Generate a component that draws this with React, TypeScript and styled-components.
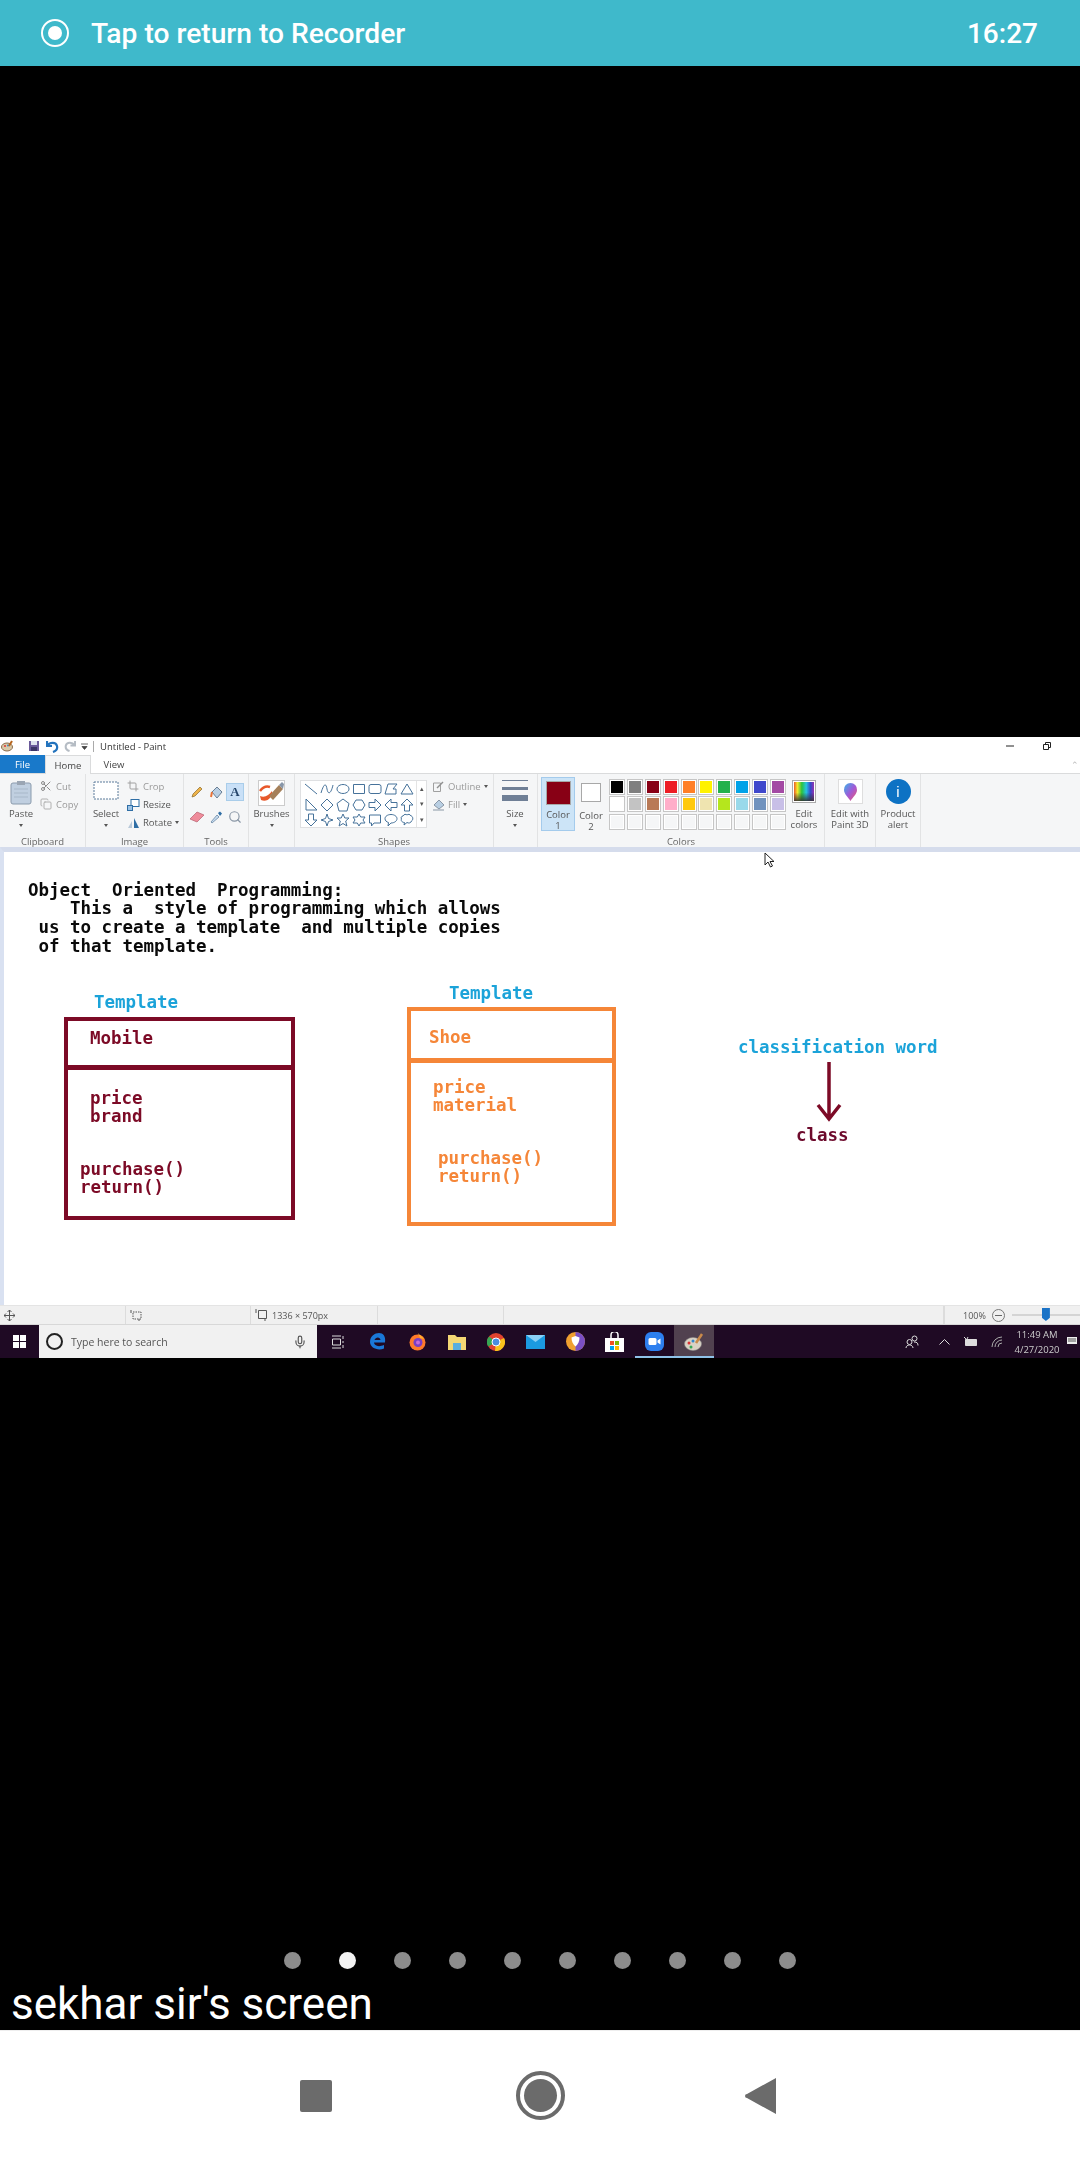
import React from "react";
import styled, { createGlobalStyle } from "styled-components";
import { Scissors, Copy, Crop, Search, Mic } from "lucide-react";

const Global = createGlobalStyle`
  html, body { margin: 0; padding: 0; background: #000; }
  #root { width: 1080px; height: 2160px; }
  * { box-sizing: border-box; }
`;

const Screen = styled.div`
  width: 1080px; height: 2160px; display: flex; flex-direction: column; background: #000; overflow: hidden;
  font-family: Roboto, sans-serif;
`;
const TopBar = styled.div`
  height: 66px; background: #3fb9cb; color: #fff; display: flex; align-items: center; padding: 0 42px 0 41px; flex: none;
`;
const RecDot = styled.div`
  width: 28px; height: 28px; border-radius: 50%; border: 2px solid #fff; display: flex; align-items: center; justify-content: center; margin-right: 22px;
  &::after { content: ""; width: 14px; height: 14px; border-radius: 50%; background: #fff; }
`;
const TopText = styled.div`
  font: 500 28.2px/69px Roboto, sans-serif; flex: 1;
`;
const TopTime = styled.div`
  font: 500 28px/69px Roboto, sans-serif;
`;
const BlackGap = styled.div`
  height: 671px; flex: none; background: #000;
`;
const Paint = styled.div`
  height: 621px; flex: none; display: flex; flex-direction: column; background: #fff; filter: blur(0.35px);
  font-family: "Open Sans", "Noto Sans", sans-serif; color: #555; font-size: 9.5px; position: relative;
`;
const TitleRow = styled.div`
  height: 18px; display: flex; align-items: center; background: #fff; padding-right: 29px;
`;
const TitleText = styled.span`
  font-size: 9.5px; color: #333; margin-left: 1px; padding-left: 6px; border-left: 1px solid #aaa; line-height: 11px;
`;
const QuickIcon = styled.span<{ $w: number }>`
  width: ${p => p.$w}px; height: 18px; display: flex; align-items: center; justify-content: center; flex: none;
`;
const WinControls = styled.div`
  margin-left: auto; display: flex; align-items: center; gap: 29px;
`;
const TabsRow = styled.div`
  height: 19px; display: flex; align-items: stretch; background: #fff; border-bottom: 1px solid #dadbdc; position: relative;
`;
const Tab = styled.div<{ $kind?: "file" | "active" }>`
  width: ${p => (p.$kind ? (p.$kind === "file" ? 45 : 46) : 34)}px;
  margin-left: ${p => (p.$kind ? 0 : 6)}px;
  height: ${p => (p.$kind === "active" ? 19 : 18)}px;
  display: flex; align-items: center; justify-content: center; font-size: 9.5px;
  background: ${p => (p.$kind === "file" ? "#1979ca" : p.$kind === "active" ? "#f5f6f7" : "#fff")};
  color: ${p => (p.$kind === "file" ? "#fff" : "#444")};
  ${p => p.$kind === "active" && "border: 1px solid #dadbdc; border-bottom: none;"}
`;
const Collapse = styled.div`
  position: absolute; right: 1px; top: 5px; color: #bbb; font-size: 9px; line-height: 9px;
`;
const Ribbon = styled.div`
  height: 73px; display: flex; background: #f5f6f7; flex: none;
`;
const Group = styled.div<{ $w: number }>`
  width: ${p => p.$w}px; flex: none; height: 100%; display: flex; flex-direction: column; position: relative;
  border-right: 1px solid #e2e3e4; 
`;
const GroupBody = styled.div`
  flex: 1; display: flex; min-height: 0;
`;
const GroupLabel = styled.div`
  height: 11px; line-height: 11px; text-align: center; font-size: 9.5px; color: #666; flex: none;
`;
const LargeButton = styled.div<{ $w: number; $ml?: number }>`
  width: ${p => p.$w}px; margin-left: ${p => p.$ml ?? 0}px; flex: none; display: flex; flex-direction: column; align-items: center; padding-top: 6px;
`;
const LargeIcon = styled.div`
  height: 29px; display: flex; align-items: flex-start; justify-content: center; flex: none;
`;
const LargeText = styled.div`
  font-size: 9.5px; line-height: 10.5px; color: #555; text-align: center; white-space: pre-line;
`;
const Caret = styled.div`
  width: 0; height: 0; border: 2px solid transparent; border-top: 3px solid #555; margin-top: 4px;
`;
const SmallStack = styled.div<{ $ml?: number }>`
  display: flex; flex-direction: column; padding-top: 3px; margin-left: ${p => p.$ml ?? 0}px;
`;
const SmallRow = styled.div<{ $dim?: boolean }>`
  height: 18px; display: flex; align-items: center; gap: 3px; font-size: 9.5px; white-space: nowrap;
  color: ${p => (p.$dim ? "#9a9a9a" : "#555")};
`;
const SmallIcon = styled.span`
  width: 14px; height: 14px; display: flex; align-items: center; justify-content: center; flex: none;
`;
const InlineCaret = styled.span`
  width: 0; height: 0; border: 2px solid transparent; border-top: 3px solid #555; margin-top: 3px;
`;
const ToolGrid = styled.div`
  display: grid; grid-template-columns: repeat(3, 18px); grid-auto-rows: 18px; row-gap: 7px; padding: 9px 0 0 4px; column-gap: 1px;
`;
const ToolCell = styled.div<{ $on?: boolean }>`
  display: flex; align-items: center; justify-content: center;
  ${p => p.$on && "background:#c9e0f7;border:1px solid #a9cdea;"}
  font: bold 13px "Liberation Serif", serif; color: #26456b;
`;
const Gallery = styled.div`
  margin: 6px 0 0 5px; width: 127px; height: 48px; background: #fff; border: 1px solid #dfe0e2; display: flex; flex: none;
`;
const ShapeGrid = styled.div`
  display: grid; grid-template-columns: repeat(7, 16px); grid-auto-rows: 15.5px; width: 115px; padding: 0 0 0 2px;
`;
const ShapeCell = styled.svg`
  width: 14px; height: 14px; fill: none; stroke: #46729a; stroke-width: 1; margin: 1px;
`;
const GalleryScroll = styled.div`
  flex: 1; border-left: 1px solid #e4e4e4; display: flex; flex-direction: column; align-items: center; justify-content: space-around; color: #555; font-size: 7px; line-height: 7px;
`;
const SizeLines = styled.div`
  width: 26px; height: 21px; display: flex; flex-direction: column; justify-content: space-between;
`;
const SizeLine = styled.div<{ $h: number }>`
  height: ${p => p.$h}px; background: #6f7f96;
`;
const ColorButton = styled.div<{ $on?: boolean; $w: number; $ml: number }>`
  width: ${p => p.$w}px; margin: 3px 0 0 ${p => p.$ml}px; height: 54px; flex: none; display: flex; flex-direction: column; align-items: center; text-align: center;
  ${p => (p.$on ? "background:#cce4f7;border:1px solid #a4cbec;padding-top:3px;" : "padding-top:6px;")}
`;
const BigSwatch = styled.div<{ $c: string; $s: number }>`
  width: ${p => p.$s + 1}px; height: ${p => p.$s}px; background: ${p => p.$c}; border: 1px solid #a8a8a8; margin-bottom: ${p => (p.$s > 22 ? 5 : 9)}px; flex: none;
`;
const Palette = styled.div`
  display: grid; grid-template-columns: repeat(10, 16px); grid-auto-rows: 16px; gap: 1.4px 1.9px; margin: 5px 0 0 2px; flex: none;
`;
const PalCell = styled.div<{ $c?: string }>`
  background: ${p => p.$c ?? "#f5f6f7"}; border: 1px solid #c6c6c6; box-shadow: inset 0 0 0 1px #fff;
`;
const EditGrad = styled.div`
  width: 24px; height: 23px; border: 1px solid #aaa; box-shadow: inset 0 0 0 1px #fff;
  background: linear-gradient(#0000 55%, #333), linear-gradient(90deg, #e6312a, #f5e82a, #2ac23f, #25c4e0, #3647c9, #b02ca8);
`;
const Tile = styled.div`
  width: 25px; height: 25px; background: #fff; border: 1px solid #dedede; display: flex; align-items: center; justify-content: center; margin-top: -1px;
`;
const InfoDot = styled.div`
  width: 25px; height: 25px; margin-top: -1px; border-radius: 50%; background: #0d72c4; color: #fff; display: flex; align-items: center; justify-content: center;
  font: 15px "Liberation Sans", sans-serif;
`;
const Canvas = styled.div`
  height: 458px; flex: none; background: #fff; border-top: 5px solid #d5dcec; border-left: 4px solid #d9e1f1; position: relative; overflow: hidden;
`;
const Drawn = styled.div<{ $x: number; $y: number; $c: string }>`
  position: absolute; left: ${p => p.$x - 4}px; top: ${p => p.$y - 852 - 9.5}px; color: ${p => p.$c};
  font: bold 17.5px/18.8px "DejaVu Sans Mono", monospace; white-space: pre; letter-spacing: -0.03px;
`;
const ClassBox = styled.div<{ $x: number; $y: number; $w: number; $h: number; $c: string; $d: number }>`
  position: absolute; left: ${p => p.$x - 4}px; top: ${p => p.$y - 852}px; width: ${p => p.$w}px; height: ${p => p.$h}px;
  border: 4px solid ${p => p.$c};
  &::after { content: ""; position: absolute; left: -4px; right: -4px; top: ${p => p.$d}px; height: 5px; background: ${p => p.$c}; }
`;
const FloatingSvg = styled.svg<{ $x: number; $y: number }>`
  position: absolute; left: ${p => p.$x}px; top: ${p => p.$y}px;
`;
const StatusBar = styled.div`
  height: 20px; flex: none; background: #f0f0f0; border-top: 1px solid #e4e4e4; border-bottom: 1px solid #d8d8d8; display: flex; font-size: 9px; color: #555;
`;
const StatusCell = styled.div<{ $w: number }>`
  width: ${p => p.$w}px; flex: none; display: flex; align-items: center; gap: 4px; padding-left: 4px; border-right: 1px solid #dcdcdc; white-space: nowrap;
`;
const ZoomCell = styled.div`
  flex: 1; display: flex; align-items: center; padding-left: 18px; white-space: nowrap; border-left: 1px solid #dcdcdc;
`;
const ZoomMinus = styled.div`
  width: 13px; height: 13px; border-radius: 50%; border: 1px solid #777; margin-left: 6px; display: flex; align-items: center; justify-content: center;
  &::after { content: ""; width: 7px; height: 1px; background: #666; }
`;
const ZoomTrack = styled.div`
  flex: 1; height: 2px; background: #d4d4d4; margin-left: 7px; position: relative;
`;
const ZoomThumb = styled.div`
  position: absolute; left: 30px; top: -6px; width: 8px; height: 13px; background: #1a73c7; clip-path: polygon(0 0, 100% 0, 100% 75%, 50% 100%, 0 75%);
`;
const Taskbar = styled.div`
  height: 33px; flex: none; background: #1f0a24; display: flex; align-items: stretch; color: #ddd;
`;
const StartBtn = styled.div`
  width: 39px; flex: none; display: flex; align-items: center; justify-content: center;
`;
const SearchBox = styled.div`
  width: 278px; flex: none; background: #f1f1f1; display: flex; align-items: center; padding-left: 7px; color: #555; font-size: 10.5px;
`;
const Cortana = styled.div`
  width: 17px; height: 17px; border-radius: 50%; border: 2.5px solid #222; margin-right: 8px;
`;
const SearchMic = styled.span`
  margin-left: auto; margin-right: 10px; display: flex; color: #555;
`;
const TaskView = styled.div`
  width: 41px; flex: none; display: flex; align-items: center; justify-content: center;
`;
const TaskBtn = styled.div<{ $open?: boolean; $active?: boolean }>`
  width: 39.5px; flex: none; display: flex; align-items: center; justify-content: center;
  ${p => p.$active && "background:#51414f;"}
  ${p => p.$open && "box-shadow: inset 0 -2px 0 #8fc2e8;"}
`;
const Tray = styled.div<{ $w: number }>`
  width: ${p => p.$w}px; flex: none; display: flex; align-items: center; justify-content: center;
`;
const TraySpacer = styled.div`
  flex: 1;
`;
const Clock = styled.div`
  width: 54px; flex: none; display: flex; flex-direction: column; align-items: center; justify-content: center; font-size: 9.5px; line-height: 15px; color: #ccc; white-space: nowrap;
`;
const Footer = styled.div`
  flex: 1; background: #000; display: flex; flex-direction: column; justify-content: flex-end;
`;
const Dots = styled.div`
  display: flex; justify-content: center; gap: 38px; margin-bottom: 11px;
`;
const Dot = styled.div<{ $on?: boolean }>`
  width: 17px; height: 17px; border-radius: 50%; background: ${p => (p.$on ? "#f2f2f2" : "#8c8c8c")};
`;
const Caption = styled.div`
  height: 50px; color: #fff; font: 400 44px/48px Roboto, sans-serif; padding-left: 11px; white-space: nowrap;
`;
const NavBar = styled.div`
  height: 130px; flex: none; background: #fff; display: flex; align-items: center; padding-left: 300px; border-top: 1px solid #eee;
`;
const NavSquare = styled.div`
  width: 32px; height: 32px; border-radius: 2px; background: #6b6b6b;
`;
const NavHome = styled.div`
  width: 49px; height: 49px; border-radius: 50%; border: 4px solid #6b6b6b; margin: 0 180px 0 184px; display: flex; align-items: center; justify-content: center;
  &::after { content: ""; width: 33px; height: 33px; border-radius: 50%; background: #6b6b6b; }
`;
const NavBack = styled.svg`
  width: 32px; height: 38px; fill: #6b6b6b;
`;

const shapes = [
  "M1 2 L13 12", "M1 11 C4 1 6 1 7 7 S11 12 13 3", "M7 2.5a6 4.5 0 1 0 .01 0Z", "M1.5 2.5h11v9h-11Z",
  "M3 2.5h8a2 2 0 0 1 2 2v5a2 2 0 0 1-2 2H3a2 2 0 0 1-2-2v-5a2 2 0 0 1 2-2Z", "M1 12 L4 2h9L9 7h3v5Z", "M7 2 L13 12H1Z",
  "M2 1v11h11Z", "M7 1l6 6-6 6-6-6Z", "M7 1l6 4.5-2 7.5H3L1 5.5Z", "M4 2h6l3 5-3 5H4L1 7Z", "M1 4.5h6V1l6 6-6 6V9.5H1Z", "M13 4.5H7V1L1 7l6 6V9.5h6Z", "M4.5 13V7H1l6-6 6 6H9.500V13Z",
  "M4.5 1v6H1l6 6 6-6H9.500V1Z", "M7 1l1.5 4.500L13 7l-4.500 1.500L7 13l-1.500-4.500L1 7l4.500-1.500Z", "M7 1l1.800 4H13l-3.300 3 1.200 5L7 10.500 3.100 13l1.200-5L1 5h4.200Z",
  "M7 1l1.700 3H13l-2 3 2 3H8.700L7 13l-1.700-3H1l2-3-2-3h4.300Z", "M1.500 2h11v8H6l-2.500 3v-3h-2Z", "M7 1.500c3.300 0 6 1.800 6 4.200S10.300 10 7 10l-3 3 .5-3.500C2.500 9 1 7.500 1 5.700 1 3.300 3.700 1.500 7 1.500Z",
  "M3 3c1-2 3-2 4-1 1-1 3-1 4 1 2 0 2.500 4 .5 5-.5 2-3 2.500-4.500 1.500L4 12l.5-2.500C2.500 9.500 .5 8 1.500 6 .5 4.500 1.500 3 3 3Z",
];
const row1 = ["#000000", "#7f7f7f", "#880015", "#ed1c24", "#ff7f27", "#fff200", "#22b14c", "#00a2e8", "#3f48cc", "#a349a4"];
const row2 = ["#ffffff", "#c3c3c3", "#b97a57", "#ffaec9", "#ffc90e", "#efe4b0", "#b5e61d", "#99d9ea", "#7092be", "#c8bfe7"];
const maroon = "#7c0a26", orange = "#f58638", blue = "#1ba3d9";

export default function App() {
  return (
    <Screen>
      <Global />
      <TopBar>
        <RecDot />
        <TopText>Tap to return to Recorder</TopText>
        <TopTime>16:27</TopTime>
      </TopBar>
      <BlackGap />
      <Paint>
        <TitleRow>
          <QuickIcon $w={14}>
            <svg width="12" height="12" viewBox="0 0 12 12"><ellipse cx="6" cy="7" rx="5.500" ry="4" fill="#d9c9a8" stroke="#8a6a4a" /><circle cx="4" cy="6" r="1" fill="#d33" /><circle cx="7" cy="5.500" r="1" fill="#38c" /><path d="M8 6 L11 1" stroke="#b5651d" strokeWidth="2" /></svg>
          </QuickIcon>
          <QuickIcon $w={14} />
          <QuickIcon $w={12}>
            <svg width="12" height="12" viewBox="0 0 12 12"><path d="M1 1h10v10H1Z" fill="#6a5a9a" /><path d="M3 1h6v4H3Z" fill="#dfe3ee" /><path d="M3 7h6v4H3Z" fill="#3b3566" /></svg>
          </QuickIcon>
          <QuickIcon $w={24}>
            <svg width="13" height="13" viewBox="0 0 13 13"><path d="M1 1v5h5M1.500 5.500C4 2 10 2 11 6c.7 3-1 5-4 6" fill="none" stroke="#2373bd" strokeWidth="2.200" /></svg>
          </QuickIcon>
          <QuickIcon $w={12}>
            <svg width="12" height="12" viewBox="0 0 13 13"><path d="M12 1v5H7M11.500 5.500C9 2 3 2 2 6c-.7 3 1 5 4 6" fill="none" stroke="#b5bcc4" strokeWidth="2.200" /></svg>
          </QuickIcon>
          <QuickIcon $w={16}>
            <svg width="7" height="7" viewBox="0 0 7 7"><path d="M0 1h7M1 3.500h5L3.500 6.500Z" fill="#444" stroke="#444" strokeWidth=".8" /></svg>
          </QuickIcon>
          <TitleText>Untitled - Paint</TitleText>
          <WinControls>
            <svg width="8" height="8" viewBox="0 0 8 8"><path d="M0 4h8" stroke="#222" /></svg>
            <svg width="8" height="8" viewBox="0 0 8 8"><path d="M.5 2.500h5v5h-5ZM2.500 2.500V.5h5v5h-2" fill="none" stroke="#222" /></svg>
          </WinControls>
        </TitleRow>
        <TabsRow>
          <Tab $kind="file">File</Tab>
          <Tab $kind="active">Home</Tab>
          <Tab>View</Tab>
          <Collapse>⌃</Collapse>
        </TabsRow>
        <Ribbon>
          <Group $w={86}>
            <GroupBody>
              <LargeButton $w={42}>
                <LargeIcon>
                  <svg width="22" height="25" viewBox="0 0 22 25"><rect x="1" y="3" width="20" height="21" rx="2" fill="#c0cfe0" stroke="#8b9bad" /><rect x="7" y="1" width="8" height="4" fill="#9aa5b3" /><path d="M4 9h14M4 13h14M4 17h14" stroke="#a8b8c9" /></svg>
                </LargeIcon>
                <LargeText>Paste</LargeText>
                <Caret />
              </LargeButton>
              <SmallStack $ml={-3}>
                <SmallRow $dim><SmallIcon><Scissors size={12} color="#8a8a8a" /></SmallIcon>Cut</SmallRow>
                <SmallRow $dim><SmallIcon><Copy size={12} color="#b0b0b0" /></SmallIcon>Copy</SmallRow>
              </SmallStack>
            </GroupBody>
            <GroupLabel>Clipboard</GroupLabel>
          </Group>
          <Group $w={98}>
            <GroupBody>
              <LargeButton $w={40}>
                <LargeIcon>
                  <svg width="26" height="20" viewBox="0 0 26 20"><rect x="1" y="2" width="24" height="17" fill="#fff" stroke="#5a7a9a" strokeDasharray="2 1" /></svg>
                </LargeIcon>
                <LargeText>Select</LargeText>
                <Caret />
              </LargeButton>
              <SmallStack>
                <SmallRow $dim><SmallIcon><Crop size={12} color="#a0a0a0" /></SmallIcon>Crop</SmallRow>
                <SmallRow><SmallIcon><svg width="13" height="13" viewBox="0 0 13 13"><rect x="4" y="1.500" width="8" height="7" fill="#fff" stroke="#2f6ea5" /><rect x=".5" y="7.500" width="5" height="5" fill="#9cc3e6" stroke="#2f6ea5" /></svg></SmallIcon>Resize</SmallRow>
                <SmallRow><SmallIcon><svg width="13" height="13" viewBox="0 0 13 13"><path d="M7 2 L12 12H7Z" fill="#2f6ea5" /><path d="M5 5 L1 12h4Z" fill="#b9c9d9" /></svg></SmallIcon>Rotate<InlineCaret /></SmallRow>
              </SmallStack>
            </GroupBody>
            <GroupLabel>Image</GroupLabel>
          </Group>
          <Group $w={65}>
            <GroupBody>
              <ToolGrid>
                <ToolCell><svg width="14" height="14" viewBox="0 0 14 14"><path d="M2 12 L3 9 L10 2 L12 4 L5 11Z" fill="#eeb34a" stroke="#8a6a2a" strokeWidth=".7" /></svg></ToolCell>
                <ToolCell><svg width="15" height="15" viewBox="0 0 15 15"><path d="M3 7 L8 2 L13 7 L8 13Z" fill="#b9cfe3" stroke="#6a7f95" /><path d="M3 7 L2 12" stroke="#e8743a" strokeWidth="2" /></svg></ToolCell>
                <ToolCell $on>A</ToolCell>
                <ToolCell><svg width="16" height="14" viewBox="0 0 16 14"><path d="M1 9 L8 2 L15 5 L8 12 Z" fill="#ef8c9b" stroke="#b5606e" strokeWidth=".7" /></svg></ToolCell>
                <ToolCell><svg width="14" height="14" viewBox="0 0 14 14"><path d="M2 12 L8 5 L10 7 L3 13Z" fill="#c7dcf0" stroke="#5a7a9a" strokeWidth=".7" /><path d="M9 3 L11 1.500 L13 3.500 L11 6Z" fill="#2f6ea5" /></svg></ToolCell>
                <ToolCell><Search size={14} color="#8a97a6" /></ToolCell>
              </ToolGrid>
            </GroupBody>
            <GroupLabel>Tools</GroupLabel>
          </Group>
          <Group $w={46}>
            <GroupBody>
              <LargeButton $w={45}>
                <LargeIcon>
                  <svg width="27" height="26" viewBox="0 0 27 26"><rect x=".5" y=".5" width="26" height="25" fill="#fff" stroke="#ccc" /><path d="M2 16c5 2 9-1 12-5 1 6-5 12-11 9Z" fill="#e8582a" /><path d="M11 16 L21 5 L25 9 L15 20Z" fill="#a5805a" /><path d="M21 5L24 2l2 2-1 5Z" fill="#8896a8" /><path d="M2 11c3-4 7-5 10-4" stroke="#e8582a" strokeWidth="2.500" fill="none" /></svg>
                </LargeIcon>
                <LargeText>Brushes</LargeText>
                <Caret />
              </LargeButton>
            </GroupBody>
          </Group>
          <Group $w={199}>
            <GroupBody>
              <Gallery>
                <ShapeGrid>
                  {shapes.map((d, i) => (
                    <ShapeCell key={i} viewBox="0 0 14 14"><path d={d} /></ShapeCell>
                  ))}
                </ShapeGrid>
                <GalleryScroll><span>▴</span><span>▾</span><span>▾</span></GalleryScroll>
              </Gallery>
              <SmallStack $ml={4}>
                <SmallRow $dim><SmallIcon><svg width="13" height="13" viewBox="0 0 13 13"><path d="M1.500 3h7v8.500h-7Z" fill="none" stroke="#a0a0a0" /><path d="M5 8 L11 2" stroke="#909090" strokeWidth="1.500" /></svg></SmallIcon>Outline<InlineCaret /></SmallRow>
                <SmallRow $dim><SmallIcon><svg width="13" height="13" viewBox="0 0 13 13"><path d="M2 7 L7 2 L12 7 L7 11Z" fill="#b9cfe3" stroke="#8a97a6" /><path d="M1 12h11" stroke="#8a97a6" /></svg></SmallIcon>Fill<InlineCaret /></SmallRow>
              </SmallStack>
            </GroupBody>
            <GroupLabel>Shapes</GroupLabel>
          </Group>
          <Group $w={44}>
            <GroupBody>
              <LargeButton $w={42}>
                <LargeIcon><SizeLines><SizeLine $h={1} /><SizeLine $h={3} /><SizeLine $h={6} /></SizeLines></LargeIcon>
                <LargeText>Size</LargeText>
                <Caret />
              </LargeButton>
            </GroupBody>
          </Group>
          <Group $w={287}>
            <GroupBody>
              <ColorButton $on $w={34} $ml={3}>
                <BigSwatch $c="#880015" $s={24} />
                <LargeText>{"Color\n1"}</LargeText>
              </ColorButton>
              <ColorButton $w={32} $ml={0}>
                <BigSwatch $c="#ffffff" $s={19} />
                <LargeText>{"Color\n2"}</LargeText>
              </ColorButton>
              <Palette>
                {row1.map(c => <PalCell key={c} $c={c} />)}
                {row2.map(c => <PalCell key={c} $c={c} />)}
                {row1.map(c => <PalCell key={"e" + c} />)}
              </Palette>
              <LargeButton $w={36}>
                <LargeIcon><EditGrad /></LargeIcon>
                <LargeText>{"Edit\ncolors"}</LargeText>
              </LargeButton>
            </GroupBody>
            <GroupLabel>Colors</GroupLabel>
          </Group>
          <Group $w={51}>
            <GroupBody>
              <LargeButton $w={50}>
                <LargeIcon>
                  <Tile>
                    <svg width="15" height="20" viewBox="0 0 15 20">
                      <defs><linearGradient id="p3d" x1="0" y1="0" x2="1" y2="1"><stop offset="0" stopColor="#37b5e8" /><stop offset=".5" stopColor="#a05ad8" /><stop offset="1" stopColor="#f0566a" /></linearGradient></defs>
                      <path d="M7.500 1a6.500 6.500 0 0 1 6.500 7c0 4-4 7-6.500 11C5 15 1 12 1 8a6.500 6.500 0 0 1 6.500-7Z" fill="url(#p3d)" />
                    </svg>
                  </Tile>
                </LargeIcon>
                <LargeText>{"Edit with\nPaint 3D"}</LargeText>
              </LargeButton>
            </GroupBody>
          </Group>
          <Group $w={45}>
            <GroupBody>
              <LargeButton $w={44}>
                <LargeIcon><InfoDot>i</InfoDot></LargeIcon>
                <LargeText>{"Product\nalert"}</LargeText>
              </LargeButton>
            </GroupBody>
          </Group>
        </Ribbon>
        <Canvas>
          <Drawn $x={28} $y={890} $c="#0a0a0a">{"Object  Oriented  Programming:\n    This a  style of programming which allows\n us to create a template  and multiple copies\n of that template."}</Drawn>
          <Drawn $x={94} $y={1002} $c={blue}>Template</Drawn>
          <ClassBox $x={64} $y={1017} $w={231} $h={203} $c={maroon} $d={44} />
          <Drawn $x={90} $y={1038} $c={maroon}>Mobile</Drawn>
          <Drawn $x={90} $y={1098} $c={maroon}>{"price\nbrand"}</Drawn>
          <Drawn $x={80} $y={1169} $c={maroon}>{"purchase()\nreturn()"}</Drawn>
          <Drawn $x={449} $y={993} $c={blue}>Template</Drawn>
          <ClassBox $x={407} $y={1007} $w={209} $h={219} $c={orange} $d={47} />
          <Drawn $x={429} $y={1037} $c={orange}>Shoe</Drawn>
          <Drawn $x={433} $y={1087} $c={orange}>{"price\nmaterial"}</Drawn>
          <Drawn $x={438} $y={1158} $c={orange}>{"purchase()\nreturn()"}</Drawn>
          <Drawn $x={738} $y={1047} $c={blue}>classification word</Drawn>
          <FloatingSvg $x={810} $y={209} width="30" height="62" viewBox="0 0 30 62">
            <path d="M15 1V58M4 44L15 58L26 44" fill="none" stroke={maroon} strokeWidth="3.500" />
          </FloatingSvg>
          <Drawn $x={796} $y={1135} $c="#6d0a2c">class</Drawn>
          <FloatingSvg $x={760} $y={0} width="11" height="16" viewBox="0 0 11 16">
            <path d="M1 1V13L4 10L6.500 15L8.500 14L6 9.500H10Z" fill="#fff" stroke="#222" />
          </FloatingSvg>
        </Canvas>
        <StatusBar>
          <StatusCell $w={126}><svg width="11" height="11" viewBox="0 0 11 11"><path d="M5.500 0v11M0 5.500h11M3.500 2L5.500 0 7.500 2M3.500 9l2 2 2-2M2 3.500L0 5.500l2 2M9 3.500l2 2-2 2" fill="none" stroke="#555" /></svg></StatusCell>
          <StatusCell $w={125}><svg width="12" height="12" viewBox="0 0 12 12"><path d="M3 3h8v7H3Z" fill="none" stroke="#555" strokeDasharray="1.500 1" /><path d="M1 1v3M9 10v2" stroke="#555" /></svg></StatusCell>
          <StatusCell $w={127}><svg width="13" height="12" viewBox="0 0 13 12"><path d="M3.500 1.500h8v8h-8Z" fill="none" stroke="#555" /><path d="M1 0v4M10 10v2" stroke="#555" /></svg>1336 × 570px</StatusCell>
          <StatusCell $w={126} />
          <StatusCell $w={440} />
          <ZoomCell>100%<ZoomMinus /><ZoomTrack><ZoomThumb /></ZoomTrack></ZoomCell>
        </StatusBar>
        <Taskbar>
          <StartBtn><svg width="13" height="13" viewBox="0 0 13 13" fill="#fff"><path d="M0 0h6v6H0ZM7 0h6v6H7ZM0 7h6v6H0ZM7 7h6v6H7Z" /></svg></StartBtn>
          <SearchBox><Cortana />Type here to search<SearchMic><Mic size={14} /></SearchMic></SearchBox>
          <TaskView><svg width="14" height="14" viewBox="0 0 14 14"><path d="M1 1h9M1 13h9M1.500 4h8v6h-8ZM12 1v3M12 6v2M12 10v3" fill="none" stroke="#ddd" /></svg></TaskView>
          <TaskBtn><svg width="18" height="18" viewBox="0 0 18 18"><path d="M16 9.500H5c.3 3 4 5 10 2.500v3.500C9 18 1 15 1 9 1 3 6 0 10 0c4 0 7 3 6 9.500ZM5.500 7h6C11.300 3.500 6.500 3.500 5.500 7Z" fill="#1a78d8" /></svg></TaskBtn>
          <TaskBtn>
            <svg width="19" height="19" viewBox="0 0 19 19"><circle cx="9.500" cy="10.500" r="8" fill="#ff7a2a" /><path d="M9.500 0c1 3 5 4 6.500 7L12 6Z" fill="#ffb02e" /><circle cx="10" cy="10.500" r="4.500" fill="#7a3fc4" /><circle cx="10" cy="10.500" r="2" fill="#c56bd8" /></svg>
          </TaskBtn>
          <TaskBtn><svg width="18" height="16" viewBox="0 0 18 16"><path d="M0 1h7l2 2h9v13H0Z" fill="#f4d774" /><path d="M5 9h8v7H5Z" fill="#5aaee0" /></svg></TaskBtn>
          <TaskBtn>
            <svg width="18" height="18" viewBox="0 0 18 18"><circle cx="9" cy="9" r="9" fill="#e0432f" /><path d="M9 9 L1.200 13.500A9 9 0 0 1 2 3.500Z" fill="#34a853" /><path d="M9 9 L17 5A9 9 0 0 1 8 18Z" fill="#f8c21c" /><circle cx="9" cy="9" r="4" fill="#4a8de0" stroke="#fff" /></svg>
          </TaskBtn>
          <TaskBtn><svg width="19" height="15" viewBox="0 0 19 15"><path d="M0 1h19v14H0Z" fill="#1b9ae0" /><path d="M0 1L9.500 8 19 1" fill="#8ad0f5" /></svg></TaskBtn>
          <TaskBtn>
            <svg width="19" height="19" viewBox="0 0 19 19"><circle cx="9.500" cy="9.500" r="9.500" fill="#f0a030" /><path d="M9.500 0a9.500 9.500 0 0 1 0 19Z" fill="#7a4fc4" /><path d="M9.500 4l4 1.500c0 4-1.500 7-4 9-2.500-2-4-5-4-9Z" fill="#fff" /></svg>
          </TaskBtn>
          <TaskBtn>
            <svg width="19" height="20" viewBox="0 0 19 20"><path d="M0 6h19v14H0Z" fill="#fff" /><path d="M6 6V3a3.500 3.500 0 0 1 7 0v3" fill="none" stroke="#fff" strokeWidth="1.500" /><path d="M5 9h4v4H5Z" fill="#f25022" /><path d="M10 9h4v4h-4Z" fill="#7fba00" /><path d="M5 14h4v4H5Z" fill="#00a4ef" /><path d="M10 14h4v4h-4Z" fill="#ffb900" /></svg>
          </TaskBtn>
          <TaskBtn $open>
            <svg width="19" height="19" viewBox="0 0 19 19"><rect width="19" height="19" rx="6" fill="#2d7fef" /><rect x="3.500" y="6" width="8" height="7" rx="1.500" fill="#fff" /><path d="M12.500 8.500L15.500 6.500v6l-3-2Z" fill="#fff" /></svg>
          </TaskBtn>
          <TaskBtn $open $active>
            <svg width="20" height="18" viewBox="0 0 20 18"><ellipse cx="9" cy="11" rx="8.500" ry="6.500" fill="#d9d2c4" stroke="#8a8a8a" strokeWidth=".5" /><circle cx="5" cy="10" r="1.500" fill="#d33" /><circle cx="9" cy="8" r="1.500" fill="#38c" /><circle cx="7" cy="14" r="1.500" fill="#3a5" /><path d="M12 10 L18 1" stroke="#c98a4a" strokeWidth="2.500" /></svg>
          </TaskBtn>
          <TraySpacer />
          <Tray $w={36}><svg width="14" height="14" viewBox="0 0 14 14"><circle cx="4.500" cy="7" r="2.500" fill="none" stroke="#ddd" /><path d="M1 13c0-4 7-4 7 0" fill="none" stroke="#ddd" /><circle cx="9.500" cy="3.500" r="2.500" fill="none" stroke="#ddd" /><path d="M9 7c3 0 4 1 4 3.500" fill="none" stroke="#ddd" /></svg></Tray>
          <Tray $w={28}><svg width="11" height="6" viewBox="0 0 11 6"><path d="M.5 5.500l5-5 5 5" fill="none" stroke="#ddd" /></svg></Tray>
          <Tray $w={26}><svg width="14" height="10" viewBox="0 0 14 10"><path d="M1.500 2.500h11v6h-11Z" fill="#ddd" stroke="#ddd" /><path d="M0 0l2 2M4 0L3 2" stroke="#ddd" /></svg></Tray>
          <Tray $w={26}><svg width="12" height="12" viewBox="0 0 12 12"><path d="M1 11A10 10 0 0 1 11 1M4 11a7 7 0 0 1 7-7M7 11a4 4 0 0 1 4-4" fill="none" stroke="#aaa" /></svg></Tray>
          <Clock><span>11:49 AM</span><span>4/27/2020</span></Clock>
          <Tray $w={16}><svg width="10" height="10" viewBox="0 0 10 10"><path d="M0 0h10v7H0Z" fill="#eee" /><path d="M1 2h8M1 4h8" stroke="#555" /></svg></Tray>
        </Taskbar>
      </Paint>
      <Footer>
        <Dots>
          {Array.from({ length: 10 }, (_, i) => <Dot key={i} $on={i === 1} />)}
        </Dots>
        <Caption>sekhar sir's screen</Caption>
      </Footer>
      <NavBar>
        <NavSquare />
        <NavHome />
        <NavBack viewBox="0 0 32 38"><path d="M31 1v36L2 21a2 2 0 0 1 0-4Z" /></NavBack>
      </NavBar>
    </Screen>
  );
}
